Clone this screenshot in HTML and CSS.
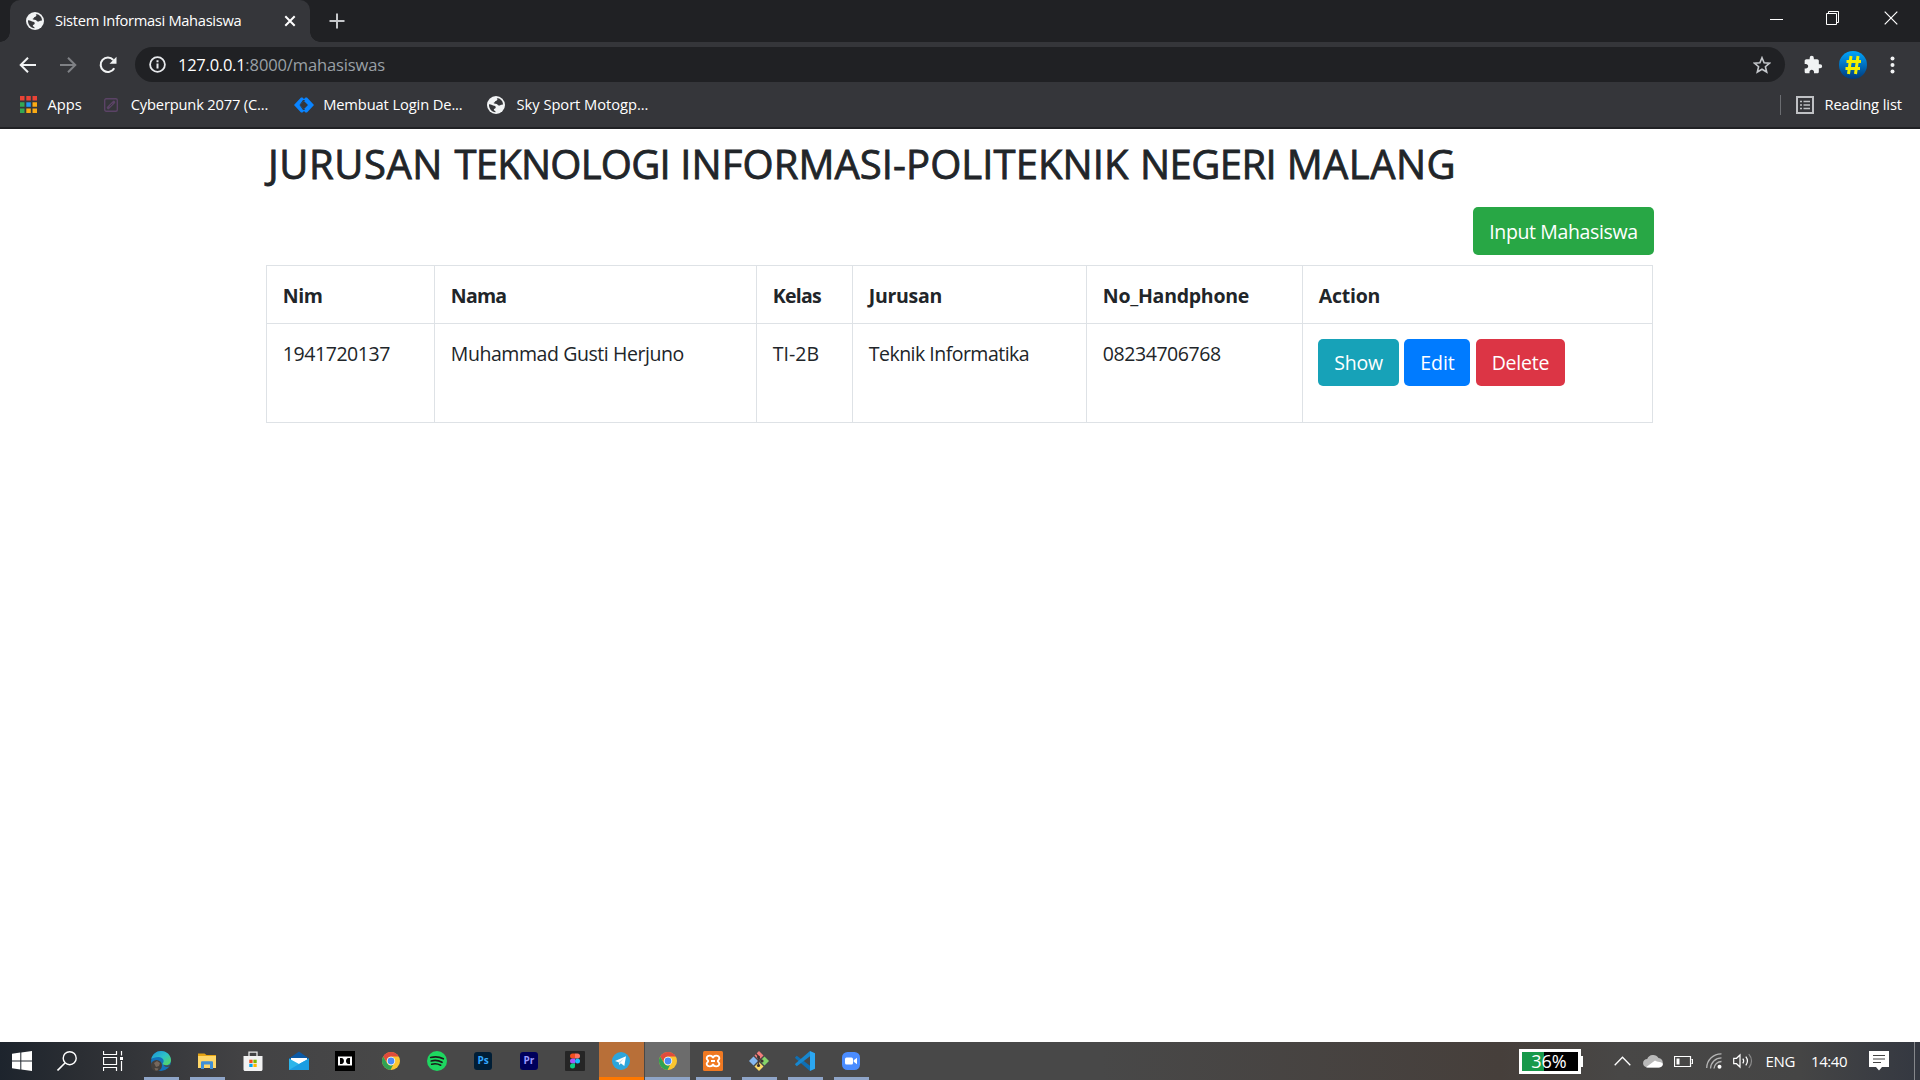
FILE: index.html
```html
<!DOCTYPE html>
<html lang="id">
<head>
<meta charset="utf-8">
<title>Sistem Informasi Mahasiswa</title>
<link rel="stylesheet" href="styles.css">
</head>
<body>
<svg width="0" height="0" class="defs" aria-hidden="true">
  <defs>
    <linearGradient id="edgeG" x1="0" y1="0" x2="1" y2="1"><stop offset="0" stop-color="#1b8fd8"/><stop offset=".5" stop-color="#2dc3c8"/><stop offset="1" stop-color="#5fd84e"/></linearGradient>
    <linearGradient id="hashG" x1="0" y1="0" x2="0" y2="1"><stop offset="0" stop-color="#00a6ff"/><stop offset="1" stop-color="#013a7c"/></linearGradient>
    <symbol id="globe" viewBox="0 0 18 18"><circle cx="9" cy="9" r="9" fill="#f1f3f4"/><path d="M9.6 1.9C11.5 3 9.8 4.6 8.7 5c-.9.3-.6 1.3-1.5 1.5-1 .2-.6 1.300 1.200 1.3 2.200 0 2.100 1.700 3.500 1.800 1.500.1 1.800-1.400 4.200-1.200A7.200 7.200 0 0 0 9.600 1.900zM2 8.300c2.700.2 3.800 1.200 5.100 1.400 1.600.3 2 1.400 1.400 2.300-.5.8-1.500.6-1.700 1.700-.1.800 1.200.6 1.700 1.900.1.400.1.600.1.700C4.500 16 1.700 12.500 2 8.300z" fill="#36373a"/></symbol>
    <symbol id="chrome" viewBox="0 0 20 20"><circle cx="10" cy="10" r="9" fill="#fbc530"/><path d="M2.200 5.500A9 9 0 0 1 17.800 5.500L10 5.500A4.500 4.500 0 0 0 6.100 12.250z" fill="#df4b3d"/><path d="M2.200 5.500 6.100 12.250A4.500 4.500 0 0 0 12 14L9.500 19A9 9 0 0 1 2.200 5.500z" fill="#2fa253"/><circle cx="10" cy="10" r="4.200" fill="#fff"/><circle cx="10" cy="10" r="3.400" fill="#4a8bf5"/></symbol>
  </defs>
</svg>

<header class="browser">
  <div class="tabstrip">
    <div class="tab">
      <svg class="i18"><use href="#globe"/></svg>
      <span class="t tab-title">Sistem Informasi Mahasiswa</span>
      <svg class="tab-close" viewBox="0 0 12 12"><path d="M1.300 1.300 10.700 10.700M10.700 1.300 1.300 10.700" stroke="#fff" stroke-width="2"/></svg>
    </div>
    <svg class="newtab" viewBox="0 0 16 16"><path d="M8 .5v15M.5 8h15" stroke="#c6c8cb" stroke-width="2"/></svg>
    <div class="winctl">
      <svg class="minimize" viewBox="0 0 14 14"><path d="M0 8.500h13" stroke="#fff"/></svg>
      <svg class="restore" viewBox="0 0 14 14"><path d="M.5 2.500h10v11H.5zM2.500 2.500V.5h10v11H11" fill="none" stroke="#fff"/></svg>
      <svg class="close" viewBox="0 0 14 14"><path d="M.7.7l12.600 12.600M13.300.7.7 13.300" stroke="#fff" stroke-width="1.200"/></svg>
    </div>
  </div>

  <div class="toolbar">
    <svg class="nav-i" viewBox="0 0 18 18"><path d="M17 9H2M9 1.700 1.700 9 9 16.300" fill="none" stroke="#f1f3f4" stroke-width="2"/></svg>
    <svg class="nav-i" viewBox="0 0 18 18"><path d="M1 9h15M9 1.700 16.300 9 9 16.300" fill="none" stroke="#7f8185" stroke-width="2"/></svg>
    <svg class="nav-i" viewBox="0 0 18 18"><path d="M15.200 12.200A7.200 7.200 0 1 1 14.300 4" fill="none" stroke="#f1f3f4" stroke-width="2.100"/><path d="M17.500.8v7h-7z" fill="#f1f3f4"/></svg>
    <div class="omnibox">
      <svg class="info" viewBox="0 0 17 17"><circle cx="8.500" cy="8.500" r="7.400" fill="none" stroke="#e8eaed" stroke-width="1.800"/><path d="M8.500 7.500v5M8.500 4.200v2" stroke="#e8eaed" stroke-width="2"/></svg>
      <span class="t host">127.0.0.1</span><span class="t path">:8000/mahasiswas</span>
      <svg class="star" viewBox="0 0 18 18"><path d="M9 1.700l2.100 5 5.400.5-4.100 3.500 1.300 5.300L9 13.200l-4.700 2.800 1.300-5.300-4.100-3.500 5.400-.5z" fill="none" stroke="#c4c7cb" stroke-width="1.600"/></svg>
    </div>
    <svg class="puzzle" viewBox="0 0 24 24"><path d="M20.500 11H19V7c0-1.100-.9-2-2-2h-4V3.500a2.500 2.500 0 0 0-5 0V5H4c-1.100 0-2 .9-2 2v3.800h1.500c1.500 0 2.700 1.200 2.700 2.700S5 16.200 3.500 16.200H2V20c0 1.100.9 2 2 2h3.800v-1.500c0-1.500 1.200-2.700 2.700-2.700s2.700 1.200 2.700 2.700V22H17c1.100 0 2-.9 2-2v-4h1.500a2.500 2.500 0 0 0 0-5z" fill="#f1f3f4"/></svg>
    <svg class="hash" viewBox="0 0 28 28"><circle cx="14" cy="14" r="14" fill="url(#hashG)"/><path d="M12 5 9.500 23M19 5l-2.500 18M7.500 10.500H22M6.500 17.500H21" stroke="#f4f000" stroke-width="3"/></svg>
    <svg class="dots" viewBox="0 0 5 18"><circle cx="2.500" cy="2.500" r="2" fill="#f1f3f4"/><circle cx="2.500" cy="9" r="2" fill="#f1f3f4"/><circle cx="2.500" cy="15.500" r="2" fill="#f1f3f4"/></svg>
  </div>

  <div class="bookmarks">
    <svg class="apps" viewBox="0 0 17 17"><path d="M0 0h4.500v4.500H0zM6.300 0h4.500v4.500H6.300zM12.500 0H17v4.500h-4.500z" fill="#ea4335"/><path d="M0 6.300h4.500v4.500H0zM0 12.500h4.500V17H0z" fill="#34a853"/><path d="M6.300 6.300h4.500v4.500H6.300z" fill="#2196f3"/><path d="M12.500 6.300H17v4.500h-4.500zM6.300 12.500h4.500V17H6.300zM12.500 12.500H17V17h-4.500z" fill="#fbab14"/></svg>
    <span class="t b1">Apps</span>
    <svg class="cyber" viewBox="0 0 14 14"><rect x=".7" y=".7" width="12.600" height="12.600" rx="1.500" fill="none" stroke="#5b4366" stroke-width="1.400"/><path d="M4.200 9.800 9.800 4.200" stroke="#5b4366" stroke-width="3" stroke-linecap="round"/><path d="M5.500 8.500l3-3" stroke="#35363a" stroke-width=".8"/></svg>
    <span class="t b2">Cyberpunk 2077 (C...</span>
    <svg class="code" viewBox="0 0 20 16"><path d="M8.500.5 11 3 6 8l5 5-2.500 2.500H7L0 8 7 .5z" fill="#0a84ff"/><path d="M11.500 15.500 9 13l5-5-5-5L11.500.5H13L20 8l-7 7.500z" fill="#0a84ff"/><path d="M9 3h2.200L6.200 8l5 5H9l-3.500-5z" fill="#35363a"/></svg>
    <span class="t b3">Membuat Login De...</span>
    <svg class="i18 g2"><use href="#globe"/></svg>
    <span class="t b4">Sky Sport Motogp...</span>
    <i class="sep"></i>
    <svg class="reading" viewBox="0 0 18 18"><rect x="1" y="1" width="16" height="16" fill="none" stroke="#bfc1c4" stroke-width="2"/><path d="M4 5.500h2M4 9h2M4 12.500h2M7.500 5.500H14M7.500 9H14M7.500 12.500H14" stroke="#bfc1c4" stroke-width="1.500"/></svg>
    <span class="t b5">Reading list</span>
  </div>
</header>

<main class="page">
  <div class="container">
    <h2><span class="w1">JURUSAN</span> <span class="w2">TEKNOLOGI</span> INFORMASI-POLITEKNIK <span class="w4">NEGERI</span> <span class="w5">MALANG</span></h2>
    <div class="actions"><a class="btn success"><span class="t p0">Input Mahasiswa</span></a></div>
    <table>
      <colgroup><col class="c1"><col class="c2"><col class="c3"><col class="c4"><col class="c5"><col class="c6"></colgroup>
      <tr><th><span class="t q1">Nim</span></th><th><span class="t q2">Nama</span></th><th><span class="t q3">Kelas</span></th><th><span class="t q4">Jurusan</span></th><th><span class="t q5">No_Handphone</span></th><th><span class="t q6">Action</span></th></tr>
      <tr class="row"><td><span class="t r1">1941720137</span></td><td><span class="t r2">Muhammad Gusti Herjuno</span></td><td><span class="t r3">TI-2B</span></td><td><span class="t r4">Teknik Informatika</span></td><td><span class="t r5">08234706768</span></td>
      <td class="cell-actions"><div class="btns"><a class="btn info-b"><span class="t p1">Show</span></a><a class="btn primary"><span class="t p2">Edit</span></a><a class="btn danger"><span class="t p3">Delete</span></a></div></td></tr>
    </table>
  </div>
</main>

<footer class="taskbar">
  <div class="task start"><svg viewBox="0 0 20 20"><path d="M0 2.800 8.300 1.600V9.500H0zM9.300 1.500 20 0v9.500H9.300zM0 10.500h8.300v7.900L0 17.200zM9.300 10.500H20V20L9.300 18.500z" fill="#fff"/></svg></div>
  <div class="task"><svg viewBox="0 0 20 20"><circle cx="12.700" cy="7.200" r="6.500" fill="none" stroke="#fff" stroke-width="1.400"/><path d="M8 12 .5 19.500" stroke="#fff" stroke-width="1.600"/></svg></div>
  <div class="task view"><svg viewBox="0 0 20 20"><path d="M.5 0v3.500h13V0M.5 20v-3.500h13V20M.5 6.500h13v7H.5zM18.500 0v4.500M18.500 10v10" fill="none" stroke="#fff" stroke-width="1.200"/><path d="M17 6h3v3h-3z" fill="#fff"/></svg></div>
  <div class="task open"><svg viewBox="0 0 20 20"><circle cx="10" cy="10" r="10" fill="#1272bd"/><path d="M.3 8C1.500 3 5.500 0 10 0c6 0 10 4.500 10 9 0 3.500-2.600 5.300-5.300 5.300-2.400 0-3.500-1-3-1.700C14 10 12 6 7.500 6 4 6 1.500 7 .3 8z" fill="url(#edgeG)"/><path d="M12.500 13.500c2 1.300 4.500 1.200 7 .2l-1 1.800c-2.500 1-5 .5-6-2z" fill="#474747"/><circle cx="5.500" cy="14.500" r="5.500" fill="#44403d"/><path d="M3 12l3-2 3 2-1 3-3 1zM3.500 17l4 .5-1 2h-2z" fill="#76685d"/></svg></div>
  <div class="task open"><svg viewBox="0 0 20 20"><path d="M1 2.500h6.500L9.500 4H19v4H1z" fill="#e6a414"/><path d="M1 5h18v12H1z" fill="#ffd768"/><path d="M4 18v-6.500c0-.8.5-1.300 1.300-1.300h9.400c.8 0 1.300.5 1.300 1.300V18h-3v-4.500H7V18z" fill="#3f8fd6"/></svg></div>
  <div class="task"><svg viewBox="0 0 20 20"><path d="M6 5V1.200h8V5" fill="none" stroke="#e8e8e8" stroke-width="1.300"/><path d="M.5 5h19v13.500c0 .8-.7 1.500-1.500 1.500H2C1.200 20 .5 19.300.5 18.500z" fill="#f2f2f2"/><path d="M6.300 8.700h3.300V12H6.300z" fill="#f04e1f"/><path d="M10.400 8.700h3.300V12h-3.300z" fill="#7db900"/><path d="M6.300 12.800h3.300V16H6.300z" fill="#00a3ee"/><path d="M10.400 12.800h3.300V16h-3.300z" fill="#ffb800"/></svg></div>
  <div class="task"><svg viewBox="0 0 20 20"><path d="M0 7.500 10 .5l10 7v11H0z" fill="#0c59a4"/><path d="M2 7h16v6H2z" fill="#fff"/><path d="M0 7.500 10 13l10-5.500V19H0z" fill="#2cb5ea"/><path d="M0 19 11 12.500 20 7.500V19z" fill="#1b9de2"/></svg></div>
  <div class="task"><svg viewBox="0 0 20 20"><path d="M0 0h20v20H0z" fill="#000"/><path d="M3 5.500h14v9H3z" fill="#fff"/><path d="M5 7h1.500c3.300 0 3.300 6 0 6H5zM15 7h-1.500c-3.300 0-3.300 6 0 6H15z" fill="#000"/></svg></div>
  <div class="task"><svg><use href="#chrome"/></svg></div>
  <div class="task"><svg viewBox="0 0 20 20"><circle cx="10" cy="10" r="10" fill="#1ed760"/><path d="M3.700 6.500c4.300-1.200 8.800-.8 12.600 1.300M4.200 10c3.600-1 7.500-.6 10.800 1.300M4.700 13.200c3-.8 6.200-.5 9 1" fill="none" stroke="#1a1a1a" stroke-width="1.700" stroke-linecap="round"/></svg></div>
  <div class="task"><span class="adobe ps">Ps</span></div>
  <div class="task"><span class="adobe pr">Pr</span></div>
  <div class="task"><svg viewBox="0 0 20 20"><rect width="20" height="20" rx="1" fill="#252525"/><path d="M10 2.500v5H7.500a2.500 2.500 0 0 1 0-5z" fill="#f24e1e"/><path d="M10 2.500h2.500a2.500 2.500 0 0 1 0 5H10z" fill="#ff7262"/><path d="M10 7.500v5H7.500a2.500 2.500 0 0 1 0-5z" fill="#a259ff"/><circle cx="12.500" cy="10" r="2.500" fill="#1abcfe"/><path d="M10 12.500V15a2.500 2.500 0 1 1-2.500-2.500z" fill="#0acf83"/></svg></div>
  <div class="task alert"><svg viewBox="0 0 20 20"><circle cx="10" cy="10" r="9" fill="#2da5dc"/><path d="M4 10 15 5.300 13.300 15 9.800 12.300 8.300 14 7.700 11.300z" fill="#fff"/><path d="M7.700 11.300 13 7.300 9 12z" fill="#b9d9ea"/></svg></div>
  <div class="task open active"><svg><use href="#chrome"/></svg></div>
  <div class="task open"><svg viewBox="0 0 20 20"><rect width="20" height="20" rx="1.500" fill="#f07922"/><path d="M10 7.300C9.800 3.800 3.700 3.800 3.700 7.200c0 1.600 1.500 1.700 1.500 2.800s-1.500 1.200-1.500 2.800c0 3.400 6.100 3.400 6.300-.1.200 3.500 6.300 3.500 6.300.1 0-1.600-1.500-1.700-1.500-2.800s1.500-1.200 1.500-2.800c0-3.400-6.100-3.400-6.300.1zM8 10h4" fill="none" stroke="#fff" stroke-width="1.900"/></svg></div>
  <div class="task open"><svg viewBox="0 0 20 20"><path d="M10 0l4.500 4.500L10 9 5.500 4.500z" fill="#f27c7c"/><path d="M4.500 5.500 9 10l-4.500 4.500L0 10z" fill="#85b8f0"/><path d="M15.500 5.500 20 10l-4.500 4.500L11 10z" fill="#85d36a"/><path d="M10 11l4.500 4.500L10 20l-4.500-4.500z" fill="#fbd968"/><path d="M7 2.500l2.500 3V15M9.500 6.500 13 10" fill="none" stroke="#4a3a38" stroke-width="1.300"/><circle cx="9.500" cy="6" r="1.500" fill="#3a3232"/><circle cx="9.500" cy="14.500" r="1.600" fill="#3a3232"/><circle cx="13" cy="10" r="1.600" fill="#3a3232"/></svg></div>
  <div class="task open"><svg viewBox="0 0 20 20"><path d="M0 6.500 1.800 4.700 15 14.800V20L.8 7.800z" fill="#0f6fb3"/><path d="M0 13.500l1.800 1.800L15 5.200V0L.8 12.200z" fill="#1787cf"/><path d="M15 0l5 2.300v15.400L15 20z" fill="#2ba7f2"/></svg></div>
  <div class="task open"><svg viewBox="0 0 20 20"><rect x="1" y="1" width="18" height="18" rx="5.500" fill="#4a8cff"/><rect x="4" y="6.500" width="8" height="7" rx="1.500" fill="#fff"/><path d="M12.700 9.200 16 6.800v6.400l-3.300-2.400z" fill="#fff"/></svg></div>

  <div class="tray">
    <div class="battery"><span class="t bat">36%</span></div>
    <svg class="chev" viewBox="0 0 17 10"><path d="M.7 9.200 8.500 1.200l7.800 8" fill="none" stroke="#fff" stroke-width="1.300"/></svg>
    <svg class="cloud" viewBox="0 0 20 14"><path d="M4.500 13.500a4.300 4.300 0 0 1-.3-8.600A6.300 6.300 0 0 1 15.500 4a4.800 4.800 0 0 1 .3 9.500z" fill="#b9b9b9"/><path d="M3 13.300 12 6.500c2 1.500 7.500 1.500 7.800 3.300.3 2-1.500 3.700-4 3.700H4.500z" fill="#fff"/></svg>
    <svg class="bt" viewBox="0 0 19 11"><path d="M.5.500h16v10H.5zM17.500 3.500h1v4h-1" fill="none" stroke="#fff" stroke-width="1.200"/><path d="M2.500 2.500h3v6h-3z" fill="#fff"/></svg>
    <svg class="wifi" viewBox="0 0 16 16"><g fill="none" stroke="#b5b5b5" stroke-width="1.300"><path d="M.7 15A14.500 14.500 0 0 1 15.500.8M4.500 15.500A11 11 0 0 1 15.500 4.800M8 15.500a7.500 7.500 0 0 1 7.500-7"/></g><circle cx="13.500" cy="13.700" r="2" fill="#fff"/></svg>
    <svg class="spk" viewBox="0 0 20 16"><path d="M.7 5.300h2.800L7 2v12l-3.500-3.300H.7z" fill="none" stroke="#fff" stroke-width="1.200"/><path d="M9.800 5.700c1 1.300 1 3.300 0 4.600M12.800 3.700c2 2.600 2 6 0 8.600" fill="none" stroke="#fff" stroke-width="1.200"/><path d="M15.800 1.200c3.600 4 3.600 9.600 0 13.600" fill="none" stroke="#8c8c8c" stroke-width="1.200"/></svg>
    <span class="t eng">ENG</span>
    <span class="t clock">14:40</span>
    <svg class="note" viewBox="0 0 20 20"><path d="M0 0h20v16h-7l-3 3.500L7 16H0z" fill="#fff"/><path d="M4 4.500h12M4 8h12M4 11.500h8" stroke="#444" stroke-width="1.200"/></svg>
    <i class="peek"></i>
  </div>
</footer>
</body>
</html>
```
FILE: styles.css
```css
* { box-sizing: border-box; }
body {
  margin: 0; width: 1920px; height: 1080px; overflow: hidden;
  display: flex; flex-direction: column; background: #fff; color: #212529;
  font-family: "Open Sans", "Noto Sans", sans-serif;
}
.defs { position: absolute; }
svg { display: block; flex: none; }
.t { white-space: nowrap; display: inline-block; }
.i18 { width: 18px; height: 18px; }

/* Browser chrome */
.browser { height: 129px; flex: none; background: #35363a; border-bottom: 2px solid #202124; color: #fff; font-size: 14.700px; }
.tabstrip { height: 42px; background: #202124; display: flex; align-items: center; padding-left: 10px; }
.tab { width: 300px; height: 42px; background: #35363a; border-radius: 10px 10px 0 0; display: flex; align-items: center; padding-left: 16px; position: relative; }
.tab::before, .tab::after { content: ""; position: absolute; bottom: 0; width: 10px; height: 10px; }
.tab::before { left: -10px; background: radial-gradient(circle at 0 0, #202124 9.500px, #35363a 10px); }
.tab::after { right: -10px; background: radial-gradient(circle at 100% 0, #202124 9.500px, #35363a 10px); }
.tab-title { margin-left: 11px; padding-bottom: 2px; letter-spacing: -.32px; }
.tab-close { width: 12px; height: 12px; margin-left: auto; margin-right: 14px; }
.newtab { width: 16px; height: 16px; margin-left: 19px; }
.winctl { margin: -6px 22px 0 auto; display: flex; }
.winctl svg { width: 14px; height: 14px; }
.restore { margin-left: 42px; margin-right: 44px; }
.toolbar { height: 45px; display: flex; align-items: center; padding-left: 18.500px; }
.nav-i { width: 18px; height: 18px; margin-right: 22px; }
.omnibox { width: 1650px; height: 35px; border-radius: 18px; background: #202124; display: flex; align-items: center; padding: 0 14px; margin-left: -3.500px; font-size: 16.500px; }
.info { width: 17px; height: 17px; margin-right: 12px; }
.host { letter-spacing: -.25px; }
.path { color: #9aa0a6; letter-spacing: -.12px; }
.star { width: 18px; height: 18px; margin-left: auto; }
.puzzle { width: 20px; height: 20px; margin-left: 18px; }
.hash { width: 28px; height: 28px; margin-left: 16px; }
.dots { width: 5px; height: 18px; margin-left: 23px; }
.bookmarks { height: 35px; display: flex; align-items: center; padding: 0 18px 0 20px; }
.bookmarks .t { padding-bottom: 2px; }
.apps { width: 17px; height: 17px; margin-right: 10.500px; }
.cyber { width: 14px; height: 14px; margin: 0 13px 0 22px; }
.b2 { letter-spacing: -.18px; }
.code { width: 20px; height: 16px; margin: 0 9.500px 0 25.500px; }
.b3 { letter-spacing: -.12px; }
.g2 { margin: 0 12px 0 24px; }
.b4 { letter-spacing: -.04px; }
.sep { width: 1px; height: 20px; background: #6b6d71; margin: 0 15px 0 auto; }
.reading { width: 18px; height: 18px; margin-right: 10.500px; }
.b5 { letter-spacing: -.09px; }

/* Page */
.page { flex: 1; min-height: 0; }
.container { width: 1388px; margin: 0 auto; }
h2 { margin: 0; padding: 11px 0 0 2px; font-size: 40px; line-height: 48px; font-weight: 400; -webkit-text-stroke: .8px #212529; letter-spacing: .07px; white-space: nowrap; }
.w1 { letter-spacing: .55px; margin-right: 1px; }
.w2 { letter-spacing: -.75px; }
.w4 { letter-spacing: -.55px; margin-left: 1px; }
.w5 { letter-spacing: .45px; }
.actions { display: flex; justify-content: flex-end; margin-top: 19px; margin-bottom: 10px; }
table { border-collapse: collapse; table-layout: fixed; width: 1387px; font-size: 19.500px; line-height: 27px; }
.c1 { width: 168px; } .c2 { width: 322px; } .c3 { width: 96px; } .c4 { width: 234px; } .c5 { width: 216px; } .c6 { width: 350px; }
th, td { border: 1px solid #dee2e6; text-align: left; vertical-align: top; padding: 15px 15px 15px 15.800px; }
th { height: 58px; padding-top: 16px; padding-bottom: 14px; }
.row td { height: 99px; line-height: 29px; }
.row .cell-actions { padding-left: 15px; }
.q1 { letter-spacing: -.4px; }
.q2, .q3 { letter-spacing: -.75px; }
.q4 { letter-spacing: -.28px; }
.q5, .q6 { letter-spacing: -.26px; }
.r1, .r2, .r5 { letter-spacing: -.43px; }
.r4 { letter-spacing: -.52px; }
.btn { display: flex; align-items: center; justify-content: center; height: 47px; border-radius: 5px; color: #fff; font-size: 19.500px; }
.btns { display: flex; }
.p0 { letter-spacing: -.36px; }
.p1, .p3 { letter-spacing: -.2px; }
.primary .t { padding-left: 1px; }
.success { width: 181px; height: 48px; background: #28a745; }
.info-b { width: 81px; background: #17a2b8; margin-right: 5px; }
.primary { width: 66px; background: #007bff; margin-right: 6px; }
.danger { width: 89px; background: #dc3545; }

/* Taskbar */
.taskbar { height: 38px; flex: none; display: flex; background: linear-gradient(90deg, #1d242d 0, #2b2e33 80px, #424244 240px, #484848 400px, #484848 1100px, #463f3b 1500px, #484746 1620px, #454545 1800px, #343841 1920px); color: #fff; }
.task { width: 46px; height: 38px; display: flex; align-items: center; justify-content: center; position: relative; }
.task svg { width: 20px; height: 20px; }
.start { width: 44px; }
.view { width: 45px; margin-right: 3px; }
.open::after { content: ""; position: absolute; bottom: 0; left: 6px; right: 5px; height: 3px; background: #8fa5c8; }
.alert { background: #b86f38; border-bottom: 3px solid #ff7800; padding: 3px 2px 0 0; width: 45px; margin-left: 1px; }
.active { background: #6c6c6c; width: 45px; margin-left: 1px; }
.active::after { left: 0; right: 0; }
.adobe { width: 18px; height: 18px; border-radius: 3px; font-size: 10px; line-height: 17px; font-weight: 700; text-align: center; }
.ps { background: #001e36; color: #31a8ff; }
.pr { background: #00005b; color: #9999ff; }
.tray { margin-left: auto; display: flex; align-items: center; font-size: 15px; }
.battery { width: 62px; height: 25px; border: 3px solid #fff; background: linear-gradient(90deg, #17994a 22px, #000 22px); display: flex; align-items: center; justify-content: center; font-size: 18px; line-height: 18px; position: relative; }
.battery::after { content: ""; position: absolute; right: -5px; top: 4px; width: 3px; height: 11px; background: #fff; }
.bat { padding-right: 2px; }
.chev { width: 17px; height: 10px; margin-left: 33px; }
.cloud { width: 20px; height: 14px; margin-left: 12px; }
.bt { width: 19px; height: 11px; margin-left: 11px; }
.wifi { width: 16px; height: 16px; margin-left: 13px; }
.spk { width: 20px; height: 16px; margin-left: 11px; }
.eng { margin-left: 12.600px; letter-spacing: -.33px; }
.clock { margin-left: 16px; letter-spacing: -.46px; }
.note { width: 20px; height: 20px; margin-left: 22px; }
.peek { width: 1px; height: 38px; background: #85878b; margin-left: 25px; margin-right: 5px; }
```
